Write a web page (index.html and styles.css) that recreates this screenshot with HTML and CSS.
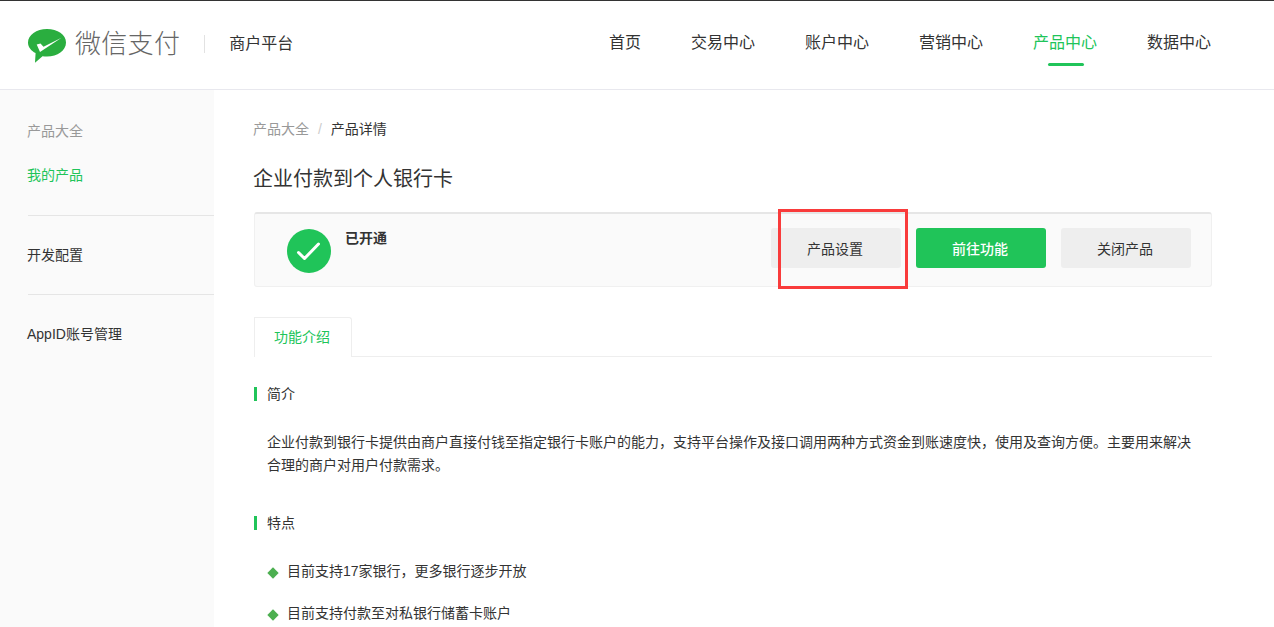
FILE: index.html
```html
<!DOCTYPE html>
<html lang="zh-CN">
<head>
  <meta charset="UTF-8">
  <title>微信支付商户平台</title>
  <link rel="stylesheet" href="styles.css">
</head>
<body>
<!-- Top bar -->
<header class="header">
  <div class="brand">
    <svg class="brand-logo" viewBox="0 0 38 34">
      <path d="M19 0C8.500 0 0 6 0 13.500c0 4.500 3 8.300 7.600 10.600L7 33.700l7.500-6.400c1.500.2 3 .2 4.500.2 10.500 0 19-6 19-14S29.500 0 19 0z" fill="#2aae3f"/>
      <path d="M8.700 15.500l3.800-1 3 3.200L33.500 8.700 12 23z" fill="#fff"/>
    </svg>
    <span class="brand-name">微信支付</span>
    <span class="brand-sub">商户平台</span>
  </div>
  <nav class="nav">
    <a class="nav-item">首页</a>
    <a class="nav-item">交易中心</a>
    <a class="nav-item">账户中心</a>
    <a class="nav-item">营销中心</a>
    <a class="nav-item active">产品中心</a>
    <a class="nav-item">数据中心</a>
  </nav>
</header>

<div class="page">
  <!-- Side menu -->
  <aside class="side">
    <div class="side-group">
      <div class="side-title">产品大全</div>
      <div class="side-link active">我的产品</div>
    </div>
    <div class="side-group">
      <div class="side-link">开发配置</div>
    </div>
    <div class="side-group">
      <div class="side-link">AppID账号管理</div>
    </div>
  </aside>

  <main class="main">
    <div class="crumbs">
      <span class="crumb-parent">产品大全</span>
      <span class="crumb-sep">/</span>
      <span class="crumb-current">产品详情</span>
    </div>
    <h1 class="title">企业付款到个人银行卡</h1>

    <!-- Status panel -->
    <div class="status">
      <svg class="status-icon" viewBox="0 0 44 44">
        <circle cx="22" cy="22" r="22" fill="#20c459"/>
        <path d="M11.500 23.500l6 6L31.500 15" fill="none" stroke="#fff" stroke-width="3" stroke-linecap="round" stroke-linejoin="round"/>
      </svg>
      <div class="status-text">已开通</div>
      <div class="status-actions">
        <button class="btn">产品设置</button>
        <button class="btn btn-primary">前往功能</button>
        <button class="btn">关闭产品</button>
      </div>
      <div class="highlight"></div>
    </div>

    <div class="tabs">
      <div class="tab">功能介绍</div>
    </div>

    <section class="block">
      <h2 class="block-title">简介</h2>
      <p class="block-text">企业付款到银行卡提供由商户直接付钱至指定银行卡账户的能力，支持平台操作及接口调用两种方式资金到账速度快，使用及查询方便。主要用来解决合理的商户对用户付款需求。</p>
    </section>

    <section class="block">
      <h2 class="block-title">特点</h2>
      <ul class="points">
        <li>目前支持17家银行，更多银行逐步开放</li>
        <li>目前支持付款至对私银行储蓄卡账户</li>
      </ul>
    </section>
  </main>
</div>
</body>
</html>
```

FILE: styles.css
```css
html, body {
  height: 627px;
  overflow: hidden;
}

body {
  margin: 0;
  font-family: "Liberation Sans", "Noto Sans CJK SC", sans-serif;
  font-size: 14px;
  color: #333;
  background-color: #fff;
}

/* Top bar */
.header {
  height: 88px;
  border-top: 1px solid #333;
  border-bottom: 1px solid #e8e8ee;
  display: flex;
  justify-content: space-between;
  align-items: center;
  padding: 0 63px 0 28px;
}

.brand {
  display: flex;
  align-items: center;
}

.brand-logo {
  width: 38px;
  height: 34px;
  margin-top: 1px;
}

.brand-name {
  margin: -3px 0 0 9px;
  font-size: 26px;
  line-height: 38px;
  font-weight: 300;
  color: #666;
  letter-spacing: 0.3px;
}

.brand-sub {
  margin-left: 24px;
  padding-left: 24px;
  font-size: 16px;
  line-height: 18px;
  border-left: 1px solid #e2e2e2;
  margin-top: -2px;
}

.nav {
  display: flex;
  gap: 50px;
  align-self: flex-start;
}

.nav-item {
  height: 65px;
  line-height: 84px;
  font-size: 16px;
  position: relative;
}

.nav-item.active {
  color: #20c459;
}

.nav-item.active::after {
  content: "";
  position: absolute;
  left: 15px;
  right: 13px;
  bottom: 0;
  height: 3px;
  border-radius: 2px;
  background-color: #20c459;
}

/* Page columns */
.page {
  display: flex;
  height: 537px;
}

.side {
  width: 214px;
  padding: 20px 0 0 28px;
  box-sizing: border-box;
  background-color: #fafafa;
  flex-shrink: 0;
}

.side-group {
  padding: 11px 0 30px;
  width: 186px;
  border-bottom: 1px solid #e5e5e5;
}

.side-group:last-child {
  border-bottom: none;
}

.side-group + .side-group {
  padding: 29px 0 29px;
}

.side-title {
  margin: 0 0 24px -1px;
  font-size: 14px;
  line-height: 20px;
  color: #999;
}

.side-link {
  margin-left: -1px;
  line-height: 20px;
}

.side-link.active {
  color: #20c459;
}

.main {
  flex: 1;
  padding: 29px 62px 0 40px;
  min-width: 0;
}

.crumbs {
  margin-left: -1px;
  font-size: 14px;
  line-height: 20px;
}

.crumb-parent {
  color: #999;
}

.crumb-sep {
  margin: 0 5px;
  color: #ccc;
}

.title {
  margin: 26px 0 19px -1px;
  font-size: 20px;
  line-height: 28px;
  font-weight: normal;
}

/* Status panel */
.status {
  height: 75px;
  box-sizing: border-box;
  border: 1px solid #f0f0f0;
  border-top: 2px solid #e6e6e6;
  border-radius: 3px;
  background-color: #fafafa;
  display: flex;
  align-items: flex-start;
  padding: 15px 20px 0 32px;
  position: relative;
}

.status-icon {
  width: 44px;
  height: 44px;
}

.status-text {
  margin: -1px 0 0 14px;
  font-weight: bold;
  font-size: 14px;
  line-height: 20px;
}

.status-actions {
  margin-left: auto;
  display: flex;
  gap: 15px;
  margin-top: -1px;
}

.btn {
  width: 130px;
  height: 40px;
  border: none;
  border-radius: 3px;
  background-color: #eee;
  color: #333;
  font-family: inherit;
  font-size: 14px;
  padding: 0 2px 0 0;
}

.btn-primary {
  background-color: #20c459;
  color: #fff;
  font-weight: 500;
}

/* Red marker drawn over the screenshot */
.highlight {
  position: absolute;
  left: 523px;
  top: -5px;
  width: 124px;
  height: 74px;
  border: 3px solid #f93b3b;
}

.tabs {
  margin-top: 30px;
  border-bottom: 1px solid #eee;
  height: 39px;
}

.tab {
  width: 94px;
  height: 39px;
  line-height: 38px;
  padding-right: 2px;
  text-align: center;
  color: #20c459;
  border: 1px solid #eee;
  border-bottom: none;
  border-top-right-radius: 3px;
  background-color: #fff;
  font-size: 14px;
}

.block-title {
  margin: 30px 0 0;
  padding-left: 10px;
  border-left: 3px solid #20c459;
  font-size: 14px;
  font-weight: normal;
  line-height: 14px;
}

.block-text {
  margin: 30px 14px 0 13px;
  font-size: 14px;
  line-height: 23px;
}

.block + .block .block-title {
  margin-top: 39px;
}

.points {
  list-style: none;
  margin: 29px 0 0;
  padding: 0 0 0 33px;
}

.points li {
  line-height: 24px;
  margin-bottom: 18px;
  position: relative;
}

.points li::before {
  content: "";
  position: absolute;
  left: -18px;
  top: 10px;
  width: 8px;
  height: 8px;
  background-color: #4caf50;
  transform: rotate(45deg);
}
```
